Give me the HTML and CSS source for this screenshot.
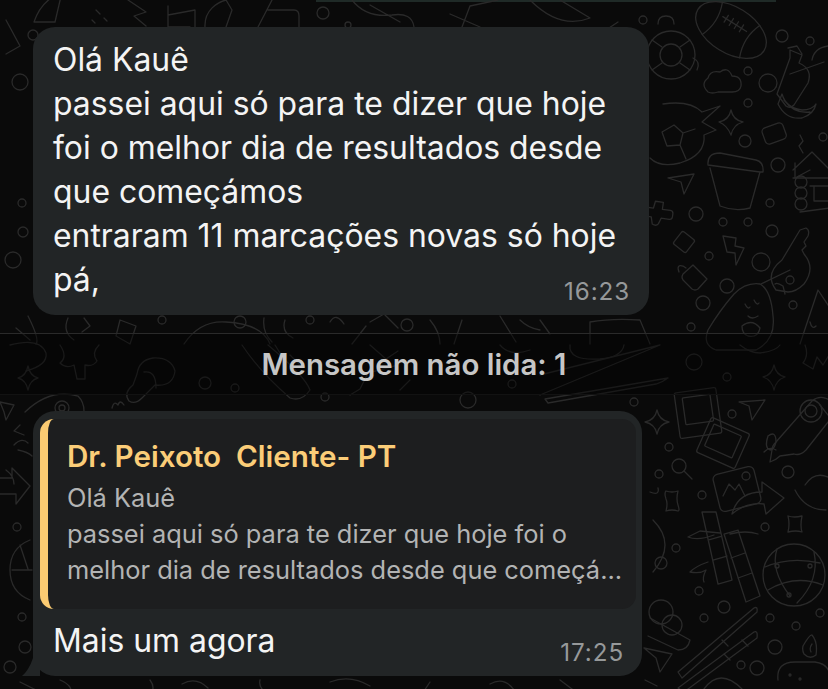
FILE: index.html
```html
<!DOCTYPE html>
<html lang="pt">
<head>
<meta charset="utf-8">
<title>Conversa</title>
<link rel="stylesheet" href="styles.css">
</head>
<body>
<main class="chat">
  <svg class="wallpaper" viewBox="0 0 828 689" width="828" height="689" aria-hidden="true">
    <g class="doodle">
      <!-- small circles -->
      <circle cx="20" cy="82" r="8"/><circle cx="33" cy="35" r="5"/><circle cx="22" cy="203" r="4"/><circle cx="23" cy="232" r="5"/><circle cx="13" cy="260" r="8"/>
      <circle cx="323" cy="13" r="6"/><circle cx="348" cy="25" r="3"/><circle cx="240" cy="322" r="6"/><circle cx="162" cy="320" r="4"/><circle cx="310" cy="320" r="4"/><circle cx="407" cy="325" r="6"/>
      <circle cx="643" cy="20" r="4"/><circle cx="782" cy="36" r="6"/><circle cx="810" cy="41" r="4"/><circle cx="748" cy="71" r="4"/><circle cx="768" cy="83" r="9"/><circle cx="748" cy="103" r="4"/><circle cx="745" cy="141" r="6"/><circle cx="778" cy="165" r="7"/><circle cx="823" cy="137" r="4"/>
      <circle cx="696" cy="214" r="7"/><circle cx="723" cy="222" r="4"/><circle cx="748" cy="222" r="4"/><circle cx="770" cy="203" r="4"/><circle cx="772" cy="231" r="6"/><circle cx="709" cy="256" r="4"/><circle cx="761" cy="262" r="9"/><circle cx="727" cy="286" r="7"/><circle cx="703" cy="303" r="7"/><circle cx="793" cy="305" r="4"/><circle cx="691" cy="327" r="4"/>
      <circle cx="205" cy="383" r="6"/><circle cx="235" cy="388" r="4"/><circle cx="325" cy="397" r="4"/><circle cx="17" cy="527" r="4"/><circle cx="22" cy="617" r="4"/><circle cx="25" cy="647" r="6"/><circle cx="10" cy="667" r="6"/>
      <circle cx="694" cy="362" r="8"/><circle cx="727" cy="377" r="4"/><circle cx="634" cy="402" r="4"/><circle cx="732" cy="414" r="4"/><circle cx="669" cy="447" r="4"/><circle cx="659" cy="474" r="4"/><circle cx="788" cy="472" r="6"/><circle cx="702" cy="495" r="4"/><circle cx="765" cy="527" r="4"/><circle cx="676" cy="548" r="4"/><circle cx="661" cy="563" r="6"/><circle cx="699" cy="591" r="4"/><circle cx="724" cy="607" r="6"/><circle cx="704" cy="618" r="4"/><circle cx="770" cy="618" r="4"/><circle cx="796" cy="626" r="4"/><circle cx="820" cy="613" r="4"/><circle cx="775" cy="647" r="7"/><circle cx="741" cy="665" r="4"/><circle cx="757" cy="668" r="7"/>
      <circle cx="468" cy="400" r="8"/><circle cx="512" cy="384" r="4"/>

      <!-- top row, mostly hidden by bubble -->
      <path d="M34 22 C40 4 52 -4 62 -8 L55 22 Z M6 20 L20 46 L6 54"/>
      <path d="M96 10 l4 4 M104 18 l3 3 M92 20 l3 3"/>
      <path d="M128 0 L146 12 L134 16 L146 26"/>
      <path d="M168 6 V27 H190 M168 15 L195 10 V27"/>
      <path d="M205 27 C204 10 218 2 226 0 L232 10 L226 27"/>
      <path d="M258 27 L272 0 M268 10 H294 Q299 10 299 16 V27"/>
      <path d="M352 0 Q366 18 392 15 Q412 12 414 27 M370 5 L400 22"/>
      <path d="M450 14 L480 27 M462 27 L470 6 L498 0"/>
      <path d="M530 0 Q560 30 590 18 L560 0 M618 22 L606 30"/>
      <!-- football -->
      <g transform="translate(731 30) rotate(32)">
        <ellipse cx="0" cy="0" rx="39" ry="23"/>
        <path d="M-22 -19 Q-14 0 -22 19 M22 -19 Q14 0 22 19 M-14 -7 H14 M-10 -11 V-3 M-4 -11 V-3 M2 -11 V-3 M8 -11 V-3"/>
      </g>
      <!-- lifebuoy -->
      <circle cx="671" cy="55" r="24"/><circle cx="671" cy="55" r="11"/>
      <path d="M658 24 q0 -8 8 -8 q8 0 8 8 M652 40 l10 7 M690 40 l-10 7 M652 70 l10 -7 M690 70 l-10 -7 M693 58 q8 4 4 12"/>
      <!-- cloud -->
      <path d="M708 92 q-8 -8 0 -14 q2 -8 12 -6 q8 -6 12 4 q10 0 9 10 q-1 6 -9 6 H718 q-6 2 -10 0 Z"/>
      <!-- bottle -->
      <path d="M790 50 l12 5 l-3 8 q14 6 9 20 l-14 22 q-4 4 -8 1 l-9 -12 l13 -36 Z M788 48 l9 -2 l5 8"/>
      <path d="M790 74 L824 62 M812 60 q2 -12 16 -14"/>
      <!-- banana -->
      <path d="M782 94 q4 14 20 16 q10 0 14 -6 q-2 10 -14 14 q-16 2 -24 -14 Z M784 100 q10 14 26 12"/>
      <!-- soccer ball -->
      <path d="M663 104 Q690 100 702 112 L720 106 L702 122 L716 130 L704 135 Q706 155 680 163 Q660 168 650 158"/>
      <path d="M662 132 l12 -7 l9 8 l-3 12 l-13 1 l-5 -14 M683 133 l12 -4 M680 145 l6 14"/>
      <!-- star -->
      <path d="M731 110 Q733 120 743 122 Q733 125 731 135 Q727 125 719 122 Q729 120 731 110 Z"/>
      <!-- rounded rect -->
      <rect x="763" y="125" width="22" height="17" rx="4" transform="rotate(-20 774 133)"/>
      <path d="M800 135 l3 6 l-4 5 l4 7"/>
      <!-- pot -->
      <path d="M708 165 Q707 153 720 153 L756 160 Q764 162 763 172 L760 172 L708 165 Z M710 168 L720 206 Q735 212 750 208 L760 172"/>
      <!-- plane -->
      <path d="M668 178 L694 174 L684 194 L681 182 Z"/>
      <!-- house -->
      <path d="M793 170 L812 152 L830 170 M795 163 L795 178 M793 178 H830 M810 186 H830 M814 186 V201 H830"/>
      <circle cx="801" cy="182" r="6"/><circle cx="801" cy="193" r="6"/><circle cx="801" cy="204" r="6"/>
      <path d="M800 212 L830 208 M795 178 L810 170"/>
      <!-- plus -->
      <path d="M654 202 h8 v7 h8 q3 0 3 3 v3 q0 3 -3 3 h-8 l-2 6 q-2 3 -6 1 l-2 -7 h-7 q-3 -2 -3 -5 q0 -4 4 -4 h7 Z" transform="rotate(8 660 212)"/>
      <!-- diamond -->
      <rect x="676" y="234" width="16" height="16" rx="2" transform="rotate(38 684 242)"/>
      <!-- lightning -->
      <path d="M723 236 L736 238 L735 246 L744 248 L736 265 L735 253 L727 252 Z"/>
      <!-- lock -->
      <path d="M683 274 l10 -9 l14 14 l-9 10 q-3 2 -6 0 l-9 -9 q-2 -3 0 -6 Z M679 272 q-3 -8 4 -6 l3 2"/>
      <!-- key -->
      <path d="M776 290 q-12 -16 6 -30 l18 -30 l6 -2 q4 2 2 8 l-4 6 l2 4 l-4 4 l2 4 q12 14 0 30 q-8 8 -16 8 Z"/>
      <path d="M785 294 l-2 -8 q-6 -4 -8 -2"/>
      <circle cx="790" cy="280" r="4"/>
      <!-- avocado -->
      <path d="M734 294 Q720 310 708 330 Q702 345 716 350 H756 Q776 340 773 316 Q771 290 760 284 Q746 282 734 294 Z"/>
      <path d="M745 304 q3 6 5 3 M754 300 q3 6 5 3 M748 316 q4 4 10 0 M742 326 q10 -8 18 2 q-2 10 -12 8 q-6 -2 -6 -10"/>
      <path d="M761 284 L790 270"/>
      <!-- tall triangle -->
      <path d="M800 344 L818 290 L830 308 M810 322 q2 8 6 4"/>
      <!-- under first bubble -->
      <path d="M16 328 L30 340 M28 316 Q40 340 36 344 M68 318 q-6 14 6 22 M84 318 l6 8 l-8 6 M120 320 l16 6 l-6 18 l-14 -8 Z"/>
      <path d="M184 344 Q200 320 226 322 Q262 324 270 344 M264 318 q-2 14 8 24 M285 320 q-4 12 8 18 M330 322 q6 -10 14 2 M370 322 l14 -8 l14 14 M352 344 l14 -18"/>
      <path d="M430 320 q10 12 10 24 M462 320 l-8 24 M500 316 l16 26 M520 320 q8 8 20 10 M540 320 l10 14 M590 322 Q612 318 640 320 L650 344 M590 322 L590 344"/>
      <!-- band row left -->
      <path d="M10 345 q30 -8 36 8 q2 12 -20 18"/>
      <path d="M28 366 Q30 376 38 378 Q30 380 28 390 Q26 380 18 378 Q26 376 28 366 Z"/>
      <path d="M60 345 q8 12 0 18 q6 6 14 2 l3 14 h8 l0 -14 q8 2 12 -4 q-6 -8 2 -16"/>
      <path d="M133 385 q-10 8 -4 16 q6 4 13 -3 l13 -13 q18 2 20 -14 q-4 -14 -22 -13 q-14 2 -16 16 Z M144 372 q12 -2 12 16"/>
      <path d="M242 345 Q260 372 290 398 Q302 402 310 390 Q305 376 268 345 M275 345 l10 16 M290 355 l10 10"/>
      <path d="M350 395 l10 -6 l8 -16 l30 -8 M370 345 l16 14 l12 -8 M400 390 l10 -10"/>
      <path d="M540 375 L660 345 L540 395 M545 399 L668 378 q-5 4 -12 6 L548 403 Z"/>
      <path d="M500 345 q10 12 30 5"/>
      <path d="M570 345 q-2 16 30 14 q22 -2 24 -14"/>
      <path d="M740 345 q10 8 20 8 q16 -2 20 -8"/>
      <path d="M774 365 Q776 375 785 377 Q776 380 774 390 Q772 380 763 377 Q772 375 774 365 Z"/>
      <path d="M805 345 q4 10 -2 18 l10 6 l4 -12 l6 8 l6 -10"/>
      <!-- band to second bubble, left -->
      <path d="M0 402 L14 405 L6 420 L4 412 Z"/>
      <path d="M25 412 Q50 388 78 396 Q84 402 84 411"/>
      <circle cx="62" cy="408" r="7"/>
      <circle cx="62" cy="408" r="3"/>
      <path d="M14 445 q8 -8 14 -2 M18 450 q10 2 14 6 M20 425 l-6 6 l10 4"/>
      <path d="M0 478 h12 v-10 l18 18 l-14 18 v-10 h-16 M6 470 q8 6 8 14"/>
      <path d="M30 540 q-20 8 -20 30 q0 22 20 30 M12 570 h20 M20 545 l8 24"/>
      <path d="M112 408 q2 -8 6 -3 q2 -6 6 0"/>
      <!-- second bubble right -->
      <path d="M657 410 Q659 420 669 422 Q659 424 657 434 Q655 424 645 422 Q655 420 657 410 Z"/>
      <rect x="677" y="390" width="42" height="46" rx="2" transform="rotate(-8 698 413)"/>
      <rect x="684" y="396" width="28" height="27" rx="1" transform="rotate(-8 698 410)"/>
      <rect x="702" y="424" width="42" height="38" rx="2" transform="rotate(24 723 443)"/>
      <rect x="708" y="429" width="30" height="24" rx="1" transform="rotate(24 723 441)"/>
      <path d="M739 402 L765 400 L752 420 L749 406 Z"/>
      <path d="M770 462 L772 450 Q772 446 776 442 L812 401 Q818 396 825 398 Q836 402 836 412 L806 450 Q800 456 794 454 L780 456 Q776 460 770 462 Z"/>
      <circle cx="811" cy="411" r="11"/><circle cx="811" cy="411" r="6"/>
      <path d="M768 436 q8 -6 8 6 q-2 8 -6 8 q-6 -2 -2 -14 M764 452 q6 -6 12 -2"/>
      <circle cx="679" cy="466" r="7"/><path d="M684 471 L692 479"/>
      <rect x="716" y="470" width="42" height="38" rx="5" transform="rotate(-14 737 489)"/>
      <circle cx="746" cy="476" r="4"/>
      <path d="M723 496 l6 -12 l6 6 l4 -6 l6 12"/>
      <path d="M732 514 Q738 492 762 492 L762 482 L784 498 L766 514 L764 504 Q746 502 732 514 Z"/>
      <path d="M666 491 q6 2 12 0 q-2 8 0 14 q2 6 0 6 q-6 -2 -12 0 q2 -8 0 -12 q-2 -6 0 -8 Z"/>
      <path d="M788 516 q6 2 14 0 q-2 10 0 16 q-6 -2 -14 0 q2 -8 0 -16 Z"/>
      <path d="M820 405 l8 10 M805 485 Q815 470 830 478 M795 490 Q805 510 826 510"/>
      <!-- bamboo -->
      <path d="M702 512 L718 584 L732 580 L716 512 Z M708 540 l14 -4 M713 560 l14 -4 M720 533 l-20 -2 l-12 6 q10 4 26 -2"/>
      <path d="M724 534 L746 602 L760 596 L738 530 Z M731 558 l14 -5 M738 578 l14 -5 M730 534 q16 -4 28 0 M708 562 q-12 4 -18 10 q10 2 16 -2 q-4 8 -2 12"/>
      <!-- globe -->
      <circle cx="794" cy="575" r="31"/>
      <path d="M777 549 Q770 570 790 596 M814 552 Q820 580 797 603 M765 567 Q790 556 820 563 M768 590 Q795 574 823 585"/>
      <circle cx="777" cy="566" r="2"/><circle cx="810" cy="566" r="2"/><circle cx="789" cy="595" r="2"/>
      <!-- balls on bubble edge -->
      <circle cx="661" cy="612" r="12"/><circle cx="672" cy="625" r="10"/>
      <path d="M650 618 L690 640 Q688 650 678 650 L648 636 M653 520 q24 24 0 52 M650 492 q10 4 8 -4"/>
      <!-- chopsticks -->
      <path d="M678 672 L754 608 Q758 606 757 612 L682 678 Z M722 640 l6 6"/>
      <path d="M678 688 L754 632 Q758 630 757 638 L684 692 Z M724 654 l6 6 M742 640 l6 6"/>
      <!-- candle -->
      <path d="M803 646 Q810 634 812 635 Q818 642 816 655 Q810 660 804 654 Q802 650 803 646 Z M778 680 Q776 662 795 662 H815 Q830 664 830 678 M812 644 q-3 4 -1 8"/>
      <circle cx="790" cy="675" r="1"/><circle cx="800" cy="679" r="1"/>
      <path d="M704 689 q16 -22 38 0 M644 648 L672 654 L660 672 L656 658 Z M645 680 l12 6"/>
      <!-- below bubble two -->
      <path d="M20 682 l16 8 M60 680 q14 6 10 14 M150 680 q6 8 0 14 M182 684 q14 -8 26 4 M260 680 q-2 8 8 14 M330 682 q20 -8 40 4 M430 682 l-8 12 M490 684 q14 -8 24 6 M560 680 l16 12"/>
    </g>
  </svg>

  <article class="bubble bubble-first">
    <p class="line">Olá Kauê</p>
    <p class="line">passei aqui só para te dizer que hoje</p>
    <p class="line">foi o melhor dia de resultados desde</p>
    <p class="line">que começámos</p>
    <p class="line">entraram 11 marcações novas só hoje</p>
    <div class="last-row">
      <p class="line">pá,</p>
      <time class="stamp">16:23</time>
    </div>
  </article>

  <div class="unread">Mensagem não lida: 1</div>

  <article class="bubble bubble-reply">
    <svg class="tail" viewBox="0 0 18 24" width="18" height="24" aria-hidden="true"><path d="M0 24 Q7 18 11 6 V0 H18 V24 Z"/></svg>
    <blockquote class="quote">
      <h2 class="quote-author">Dr. Peixoto&nbsp; Cliente- PT</h2>
      <p class="quote-line">Olá Kauê</p>
      <p class="quote-line">passei aqui só para te dizer que hoje foi o</p>
      <p class="quote-line">melhor dia de resultados desde que começá...</p>
    </blockquote>
    <div class="reply-row">
      <p class="line">Mais um agora</p>
      <time class="stamp">17:25</time>
    </div>
  </article>
</main>
</body>
</html>
```

FILE: styles.css
```css
* { box-sizing: border-box; }

html, body {
  margin: 0;
  padding: 0;
  background: #0a0a0a;
}

body {
  width: 828px;
  height: 689px;
  overflow: hidden;
  font-family: Inter, "Liberation Sans", sans-serif;
}

.chat {
  position: relative;
  width: 828px;
  height: 689px;
  padding-top: 27px;
  display: flex;
  flex-direction: column;
  overflow: hidden;
  background: linear-gradient(90deg, transparent 316px, #1f2a27 316px, #1f2a27 776px, transparent 776px) top / 100% 2px no-repeat, #0a0a0a;
}

.wallpaper {
  position: absolute;
  left: 0;
  top: 0;
}

.doodle {
  fill: none;
  stroke: #2a2a2a;
  stroke-width: 1.3;
  stroke-linejoin: round;
  stroke-linecap: round;
}

.bubble {
  position: relative;
  background: #222526;
  border-radius: 22px;
  margin-left: 33px;
}

.bubble-first {
  width: 616px;
  height: 288px;
  padding: 11px 19px 0 20px;
}

.line {
  margin: 0;
  font-size: 31.9px;
  line-height: 44px;
  color: #f4f4f4;
  white-space: nowrap;
}

.last-row,
.reply-row {
  display: flex;
  justify-content: space-between;
  align-items: flex-end;
}

.stamp {
  font-size: 24.2px;
  line-height: 30px;
  margin-bottom: -5px;
  color: #96999a;
  letter-spacing: 0.9px;
}

.unread {
  position: relative;
  margin-top: 18px;
  height: 62px;
  display: flex;
  align-items: center;
  justify-content: center;
  font-size: 29.4px;
  font-weight: 600;
  color: #c6c6c6;
  background: rgba(0, 0, 0, 0.4);
  border-top: 1px solid #2a2a2a;
  border-bottom: 1px solid #121212;
}

.bubble-reply {
  width: 609px;
  height: 265px;
  margin-top: 16px;
  padding: 8px 6px 0 7px;
}

.tail {
  position: absolute;
  left: -11px;
  bottom: 0;
  fill: #222526;
}

.quote {
  margin: 0;
  height: 190px;
  padding: 19px 0 0 19px;
  background: #1d1e1f;
  border-left: 8px solid #fbcb72;
  border-radius: 14px;
}

.quote-author {
  margin: 0 0 6px;
  font-size: 29.6px;
  line-height: 36px;
  font-weight: 600;
  color: #fbcd78;
}

.quote-line {
  margin: 0;
  font-size: 25.4px;
  line-height: 36px;
  color: #b3b4b4;
  white-space: nowrap;
}

.reply-row {
  padding: 10px 12px 0 13px;
}
```
